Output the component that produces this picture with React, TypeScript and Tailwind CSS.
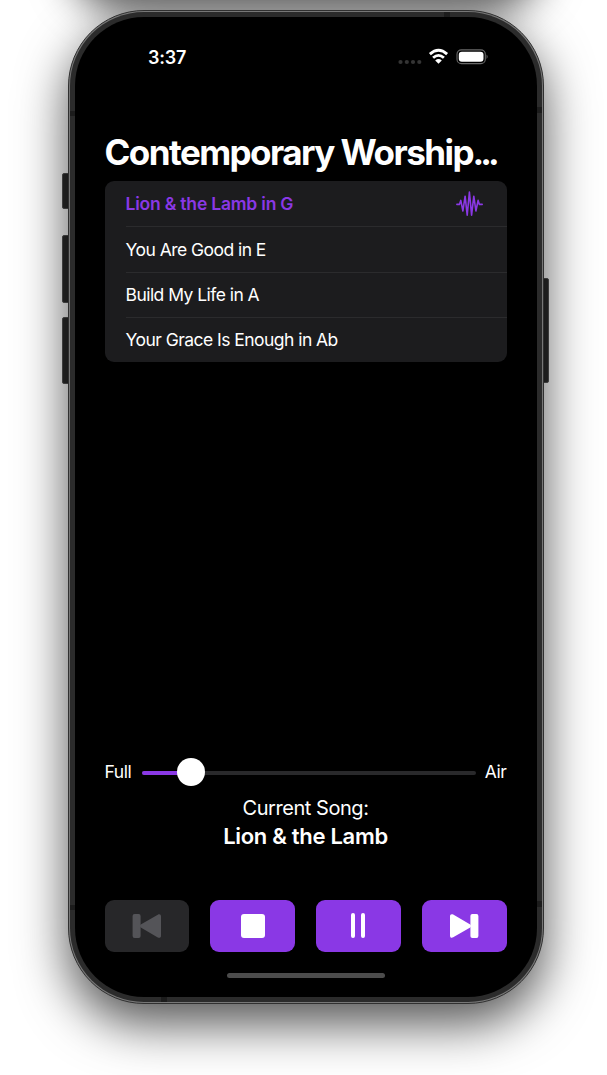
import React from "react";

const songs = ["Lion & the Lamb in G", "You Are Good in E", "Build My Life in A", "Your Grace Is Enough in Ab"];

function Waveform() {
  return (
    <svg width="28" height="28" viewBox="0 0 28 28" fill="none" stroke="#8a38e5" strokeWidth="1.6" strokeLinecap="round" strokeLinejoin="round">
      <path d="M.9 14.4H3.4L4.8 10.4L6.9 21L9.1 6.2L11.2 25.2L13.4 2L15.6 25.2L17.8 6.2L19.9 21L22.1 10.4L23.4 14.4H26.2" />
    </svg>
  );
}

function StatusBar() {
  return (
    <div className="flex h-[22px] items-center justify-between pl-[73px] pr-[48px]">
      <span className="relative top-[0.5px] text-[18px] leading-[22px] font-semibold tracking-[-0.2px]">3:37</span>
      <svg width="92" height="18" viewBox="0 0 92 18" fill="none">
        <g fill="#343434">
          <circle cx="3.5" cy="14" r="2.1" />
          <circle cx="9.8" cy="14" r="2.1" />
          <circle cx="16" cy="14" r="2.1" />
          <circle cx="22.3" cy="14" r="2.1" />
        </g>
        <g stroke="#fff" strokeWidth="2.8">
          <path d="M32.9 6.1Q41.5-1.7 50.1 6.1" />
          <path d="M36.1 9.8Q41.5 4.9 46.9 9.8" />
        </g>
        <path d="M38.2 12.4Q41.5 9.7 44.8 12.4L41.5 15.7Z" fill="#fff" />
        <rect x="60" y="1.9" width="28.3" height="13.7" rx="4.4" stroke="#686868" strokeWidth="1.1" />
        <rect x="61.8" y="3.7" width="24.7" height="10.1" rx="3" fill="#fff" />
        <path d="M89.6 6.6Q91.5 8.7 89.6 10.9Z" fill="#777" />
      </svg>
    </div>
  );
}

function SkipIcon() {
  return (
    <svg width="30" height="26" viewBox="0 0 30 26" fill="currentColor">
      <path d="M1 3.3C1 1.3 2.5.6 4.2 1.6L20.8 11.2C22.4 12.2 22.4 13.7 20.8 14.7L4.2 24.3C2.5 25.3 1 24.6 1 22.7Z" />
      <rect x="21.4" y="1" width="8" height="24" rx="1.9" />
    </svg>
  );
}

const buttonClass = "flex h-[52px] items-center justify-center rounded-[9px]";

export default function App() {
  return (
    <main className="relative h-[1075px] w-[607px] overflow-hidden bg-white pt-[10px] pl-[68px] font-['Inter',sans-serif] text-white">
      <div className="absolute top-[-420px] left-[68px] h-[412px] w-[476px] rounded-b-[60px] shadow-[0_20px_40px_rgba(0,0,0,0.65)]" />
      <div className="absolute top-[173px] left-[62px] h-[36px] w-[8px] rounded-l-[2px] border border-[#555] bg-[#2b2b2b]" />
      <div className="absolute top-[235px] left-[62px] h-[68px] w-[8px] rounded-l-[2px] border border-[#555] bg-[#2b2b2b]" />
      <div className="absolute top-[317px] left-[62px] h-[67px] w-[8px] rounded-l-[2px] border border-[#555] bg-[#2b2b2b]" />
      <div className="absolute top-[278px] left-[542px] h-[105px] w-[7px] rounded-r-[2px] border border-[#555] bg-[#2b2b2b]" />

      <div className="relative h-[994px] w-[476px] rounded-[76px] border border-[#303030] bg-[#777] p-px shadow-[0_20px_50px_rgba(0,0,0,0.68)]">
        <div className="h-full rounded-[74px] bg-[#2b2b2b] p-[5px]">
          <section className="flex h-full flex-col rounded-[69px] bg-black pt-[29px]">
            <StatusBar />
            <div className="pt-[61px] pr-[30.5px] pl-[29.5px]">
              <h1 className="h-[46px] text-[35px] leading-[46px] font-bold tracking-[-1.55px] whitespace-nowrap">Contemporary Worship<span className="-ml-[0.5px] tracking-[-3.9px]">...</span></h1>
              <ul className="mt-[6px] h-[181px] overflow-hidden rounded-[9px] bg-[#1c1c1e] pl-[21px]">
                {songs.map((song, i) => (
                  <li key={song} className={`flex h-[45.25px] items-center justify-between pt-px pr-[23px] text-[17.5px] ${i === 0 ? "font-semibold tracking-[-0.2px] text-[#8a38e5]" : "border-t border-[#2b2b2d] tracking-[-0.54px]"}`}>
                    {song}
                    {i === 0 && <Waveform />}
                  </li>
                ))}
              </ul>
            </div>

            <div className="mt-auto pr-[30.5px] pb-[19.5px] pl-[29.5px]">
              <div className="flex h-[28px] items-center gap-[9px] text-[17.5px] tracking-[-0.45px]">
                <span className="w-[28px] whitespace-nowrap">Full</span>
                <div className="relative h-[4px] flex-1 rounded-full bg-[#29292b]">
                  <div className="h-full w-[50px] rounded-full bg-[#8a38e5]" />
                  <div className="absolute top-[-13px] left-[35.5px] h-[28px] w-[28px] rounded-full bg-white" />
                </div>
                <span>Air</span>
              </div>
              <div className="mt-[7px] h-[28px] text-center text-[20px] leading-[28px] tracking-[-0.45px]">Current Song:</div>
              <div className="h-[28px] text-center text-[22px] leading-[28px] font-semibold tracking-[-0.3px]">Lion & the Lamb</div>
              <div className="mt-[50px] grid grid-cols-4 gap-[20.7px]">
                <button disabled aria-label="Previous" className={`${buttonClass} bg-[#272729] text-[#545458]`}><span className="rotate-180"><SkipIcon /></span></button>
                <button aria-label="Stop" className={`${buttonClass} bg-[#8a38e5]`}><span className="h-[24px] w-[24px] rounded-[3px] bg-white" /></button>
                <button aria-label="Pause" className={`${buttonClass} gap-[6px] bg-[#8a38e5]`}>
                  <span className="h-[25px] w-[4px] rounded-full bg-white" />
                  <span className="h-[25px] w-[4px] rounded-full bg-white" />
                </button>
                <button aria-label="Next" className={`${buttonClass} bg-[#8a38e5]`}><SkipIcon /></button>
              </div>
              <div className="mx-auto mt-[21px] h-[5px] w-[158px] rounded-full bg-[#4c4c4c]" />
            </div>
          </section>
        </div>
        <div className="absolute top-[100px] left-[1px] h-[5px] w-[5px] bg-[#1c1c1c]" />
        <div className="absolute top-[1px] left-[375px] h-[5px] w-[6px] bg-[#1c1c1c]" />
        <div className="absolute top-[96px] right-[1px] h-[6px] w-[5px] bg-[#1c1c1c]" />
        <div className="absolute top-[894px] left-[1px] h-[5px] w-[5px] bg-[#1c1c1c]" />
        <div className="absolute top-[890px] right-[1px] h-[6px] w-[5px] bg-[#1c1c1c]" />
        <div className="absolute bottom-[1px] left-[92px] h-[5px] w-[6px] bg-[#1c1c1c]" />
      </div>
    </main>
  );
}
